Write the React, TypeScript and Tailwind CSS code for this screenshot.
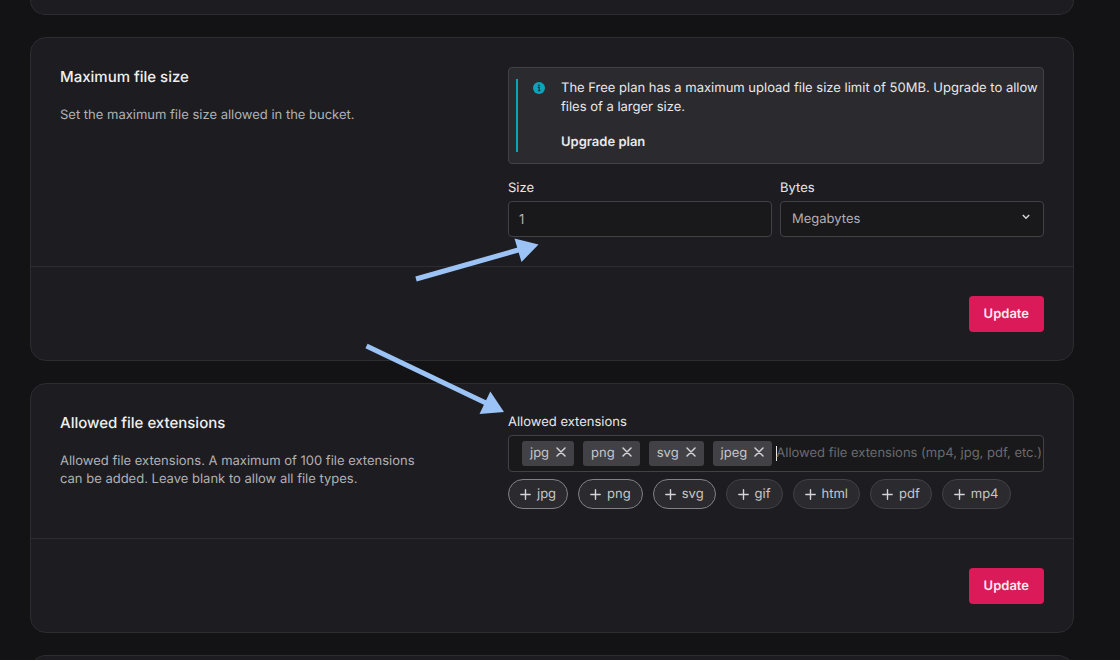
import { useState } from "react";
import type { ReactNode } from "react";

const SUGGESTIONS = ["jpg", "png", "svg", "gif", "html", "pdf", "mp4"];
const HIGHLIGHTED = ["jpg", "png", "svg"];

function InfoIcon() {
  return (
    <svg className="mt-[3px] size-3 shrink-0" viewBox="0 0 12 12" aria-hidden="true">
      <circle cx="6" cy="6" r="6" fill="#0ea2bb" />
      <circle cx="6" cy="3.4" r="0.9" fill="#2b2b2f" />
      <path d="M4.8 5.4h1.4v3.2M4.8 8.7h2.6" fill="none" stroke="#2b2b2f" strokeWidth="1.1" />
    </svg>
  );
}

function PlusIcon() {
  return (
    <svg className="size-[11px] shrink-0" viewBox="0 0 11 11" fill="none" stroke="#d4d4d6" strokeWidth="1.4" strokeLinecap="round" aria-hidden="true">
      <path d="M5.5 0.8v9.4M0.8 5.5h9.4" />
    </svg>
  );
}

function CrossIcon() {
  return (
    <svg className="size-[10px]" viewBox="0 0 10 10" fill="none" stroke="#d4d4d6" strokeWidth="1.5" strokeLinecap="round" aria-hidden="true">
      <path d="M1 1l8 8M9 1l-8 8" />
    </svg>
  );
}

function SettingsCard({ title, description, children }: { title: string; description: string; children: ReactNode }) {
  return (
    <section className="shrink-0 rounded-2xl border border-[#2d2d31] bg-[#1d1d21]">
      <div className="grid grid-cols-[52fr_67fr] gap-8 p-[29px]">
        <div>
          <h2 className="text-[15px] leading-5 font-medium text-[#efeff1]">{title}</h2>
          <p className="mt-[19px] max-w-[360px] leading-[18px] text-[#b1b1b5]">{description}</p>
        </div>
        <div className="min-w-0">{children}</div>
      </div>
      <div className="flex justify-end border-t border-[#2d2d31] px-[29px] pt-[29px] pb-7">
        <button type="button" className="h-9 rounded bg-[#db1a5a] px-[15px] font-semibold text-[#fbe9ef] [text-rendering:geometricPrecision]">
          Update
        </button>
      </div>
    </section>
  );
}

function Arrows() {
  return (
    <svg className="pointer-events-none absolute top-[230px] left-[360px]" width="190" height="190" viewBox="360 230 190 190" aria-hidden="true">
      <g fill="#9cc3f5" stroke="#9cc3f5">
        <path d="M416 279L520 249.500" strokeWidth="5" />
        <path d="M514.500 238.500L538.500 244.500L521.500 262Z" stroke="none" />
        <path d="M366.500 346L488 404" strokeWidth="5" />
        <path d="M490.300 391.500L504 412L479.500 414Z" stroke="none" />
      </g>
    </svg>
  );
}

export default function App() {
  const [extensions, setExtensions] = useState(["jpg", "png", "svg", "jpeg"]);
  const add = (name: string) => setExtensions((list) => (list.includes(name) ? list : [...list, name]));
  const remove = (name: string) => setExtensions((list) => list.filter((item) => item !== name));

  return (
    <main className="relative flex h-screen flex-col gap-[22px] overflow-hidden bg-[#131315] pr-[46px] pl-[30px] font-['Inter',sans-serif] text-[13px] leading-[21px] text-[#e8e8ea] [text-rendering:geometricPrecision]">
      <div className="h-[15px] shrink-0 rounded-b-2xl border border-t-0 border-[#2d2d31] bg-[#1d1d21]" />

      <SettingsCard title="Maximum file size" description="Set the maximum file size allowed in the bucket.">
        <div className="rounded border border-[#414146] bg-[#2b2b2f] py-[11px] pr-1 pl-[7px]">
          <div className="flex gap-4 border-l-2 border-[#0ea2bb] pl-[15px]">
            <InfoIcon />
            <div className="leading-[19px]">
              <p>The Free plan has a maximum upload file size limit of 50MB. Upgrade to allow files of a larger size.</p>
              <a href="#upgrade" className="mt-4 block font-semibold">
                Upgrade plan
              </a>
            </div>
          </div>
        </div>
        <div className="mt-[15px] grid grid-cols-2 gap-2">
          <div>
            <label htmlFor="size" className="block leading-[18px]">
              Size
            </label>
            <input id="size" type="text" inputMode="numeric" defaultValue="1" className="mt-1 block h-9 w-full rounded border border-[#414146] bg-[#19191b] px-[10px] text-[#b1b1b5] outline-none" />
          </div>
          <div>
            <label htmlFor="bytes" className="block leading-[18px]">
              Bytes
            </label>
            <div className="relative mt-1">
              <select id="bytes" defaultValue="Megabytes" className="block h-9 w-full appearance-none rounded border border-[#414146] bg-[#19191b] px-[11px] pt-px text-[#b1b1b5] outline-none [text-rendering:geometricPrecision]">
                <option>Bytes</option>
                <option>Kilobytes</option>
                <option>Megabytes</option>
                <option>Gigabytes</option>
              </select>
              <svg className="pointer-events-none absolute top-3 right-[14px] size-2" viewBox="0 0 8 8" fill="none" stroke="#d4d4d6" strokeWidth="1.5" aria-hidden="true">
                <path d="M0.800 2L4 5.200L7.200 2" />
              </svg>
            </div>
          </div>
        </div>
      </SettingsCard>

      <SettingsCard
        title="Allowed file extensions"
        description="Allowed file extensions. A maximum of 100 file extensions can be added. Leave blank to allow all file types."
      >
        <label htmlFor="extensions" className="block leading-[18px]">
          Allowed extensions
        </label>
        <div className="mt-1 flex h-[37px] items-center gap-1 rounded border border-[#414146] bg-[#19191b] pl-[13px]">
          <div className="flex shrink-0 gap-[9px]">
            {extensions.map((name) => (
              <span key={name} className="flex h-[25px] items-center gap-[7px] rounded-[3px] bg-[#414146] px-2 text-[#c6c6c9]">
                {name}
                <button type="button" aria-label={`Remove ${name}`} className="pb-[3px]" onClick={() => remove(name)}>
                  <CrossIcon />
                </button>
              </span>
            ))}
          </div>
          <div className="flex min-w-0 flex-1 items-center">
            <span className="-mr-px h-[15px] w-px shrink-0 bg-[#e8e8ea]" />
            <input
              id="extensions"
              type="text"
              placeholder="Allowed file extensions (mp4, jpg, pdf, etc.)"
              className="w-full min-w-0 bg-transparent text-[#b1b1b5] outline-none placeholder:text-[#6a6a6e] [text-rendering:geometricPrecision]"
            />
          </div>
        </div>
        <div className="mt-[7px] flex flex-wrap gap-[10px]">
          {SUGGESTIONS.map((name) => (
            <button
              key={name}
              type="button"
              onClick={() => add(name)}
              className={
                HIGHLIGHTED.includes(name)
                  ? "flex h-[30px] items-center gap-[6px] rounded-full border border-[#818186] bg-[#2b2b2f] px-[11px] text-[#c6c6c9] [text-rendering:geometricPrecision]"
                  : "flex h-[30px] items-center gap-[6px] rounded-full border border-[#414146] bg-[#2b2b2f] px-[11px] text-[#c6c6c9] [text-rendering:geometricPrecision]"
              }
            >
              <PlusIcon />
              {name}
            </button>
          ))}
        </div>
      </SettingsCard>

      <div className="min-h-10 flex-1 shrink-0 rounded-t-2xl border border-b-0 border-[#2d2d31] bg-[#1d1d21]" />
      <Arrows />
    </main>
  );
}
